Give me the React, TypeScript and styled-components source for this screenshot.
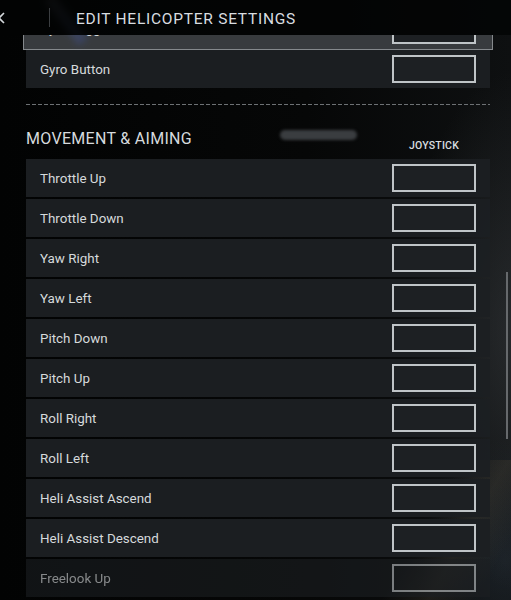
import { createGlobalStyle, styled } from 'styled-components';

const GlobalStyle = createGlobalStyle`
    html, body {
        margin: 0;
        padding: 0;
        background: #040505;
    }
`;

// Full screen backdrop with the blurred scene behind the menu
const StyledScreen = styled.div`
    position: relative;
    width: 511px;
    height: 600px;
    overflow: hidden;
    font-family: Roboto, "Liberation Sans", sans-serif;
    background:
        linear-gradient(120deg, transparent 0 78%, rgba(90, 80, 60, 0.22) 86%, transparent 94%) 0 460px / 100% 140px no-repeat,
        radial-gradient(ellipse 120px 260px at 520px 330px, rgba(70, 74, 78, 0.45), transparent),
        radial-gradient(ellipse 90px 120px at 505px 560px, rgba(40, 50, 60, 0.5), transparent),
        linear-gradient(90deg, #020303 0%, #060707 60%, #0e1011 100%);
`;

// Blue-ish light streak in the top left corner
const StyledStreak = styled.div`
    position: absolute;
    left: 60px;
    top: -8px;
    width: 12px;
    height: 56px;
    background: linear-gradient(180deg, rgba(120, 120, 130, 0.3), rgba(60, 80, 160, 0.35));
    transform: rotate(-38deg);
    filter: blur(3px);
`;

// Top bar with back arrow and title
const StyledHeader = styled.header`
    position: relative;
    z-index: 2;
    height: 35px;
    display: flex;
    align-items: center;
    background: rgba(3, 4, 4, 0.8);
`;

const StyledBack = styled.div`
    width: 30px;
    margin-left: -3px;
    display: flex;
    align-items: center;
    padding-top: 1px;
`;

const StyledDivider = styled.div`
    width: 1px;
    height: 19px;
    margin-left: 22px;
    background: #3b3e41;
`;

const StyledTitle = styled.h1`
    margin: 0 0 0 26px;
    padding-top: 2px;
    font-size: 15.5px;
    font-weight: 400;
    letter-spacing: 0.75px;
    color: #d9dde0;
    line-height: 20px;
`;

// Clipped scrolling area holding the bindings
const StyledViewport = styled.div`
    height: 565px;
    overflow: hidden;
    padding: 0 21px 0 26px;
`;

const StyledScroller = styled.div`
    margin-top: -25px;
    display: flex;
    flex-direction: column;
`;

const StyledRowList = styled.div`
    display: flex;
    flex-direction: column;
    gap: 2px;
`;

const StyledRow = styled.div<{ $selected?: boolean; $dim?: boolean }>`
    height: ${(p) => (p.$selected ? '40px' : '38px')};
    box-sizing: border-box;
    display: flex;
    align-items: center;
    justify-content: space-between;
    background: ${(p) => (p.$selected ? '#383b3e' : 'rgba(28, 31, 34, 0.97)')};
    border: ${(p) => (p.$selected ? '1px solid #85898c' : 'none')};
    margin: ${(p) => (p.$selected ? '0 -3px -2px' : '0')};
    padding: ${(p) => (p.$selected ? '0 16px 0 16px' : '0 14px')};
    opacity: ${(p) => (p.$dim ? 0.62 : 1)};
`;

const StyledLabel = styled.span<{ $raised?: boolean }>`
    font-size: 13.4px;
    letter-spacing: 0;
    color: #d6dadc;
    margin-bottom: ${(p) => (p.$raised ? '3px' : '0')};
`;

const StyledKeyBox = styled.div`
    width: 84px;
    height: 28px;
    box-sizing: border-box;
    border: 2px solid #bfc4c7;
    background: #1d2023;
`;

const StyledDashed = styled.div`
    height: 1px;
    margin-top: 16px;
    background: repeating-linear-gradient(90deg, #6d7174 0 4px, transparent 4px 6px);
`;

// Section heading with column label for the joystick bindings
const StyledSectionHead = styled.div`
    position: relative;
    height: 54px;
    display: flex;
    justify-content: space-between;
    align-items: flex-end;
`;

const StyledSectionTitle = styled.h2`
    align-self: flex-start;
    margin: 24px 0 0;
    font-size: 16px;
    font-weight: 400;
    line-height: 20px;
    letter-spacing: 0.3px;
    color: #d6dadd;
`;

const StyledColumnLabel = styled.span`
    width: 84px;
    margin: 0 14px 7px 0;
    text-align: center;
    font-size: 10.5px;
    font-weight: 500;
    line-height: 12px;
    letter-spacing: 0.2px;
    color: #d9dde0;
`;

const StyledPill = styled.div`
    position: absolute;
    left: 254px;
    top: 25px;
    width: 77px;
    height: 10px;
    border-radius: 5px;
    background: #3a3d40;
    filter: blur(1.5px);
`;

const StyledScrollbar = styled.div`
    position: absolute;
    left: 506px;
    top: 272px;
    width: 2px;
    height: 167px;
    background: #66696c;
`;

const movement = [
    'Throttle Up',
    'Throttle Down',
    'Yaw Right',
    'Yaw Left',
    'Pitch Down',
    'Pitch Up',
    'Roll Right',
    'Roll Left',
    'Heli Assist Ascend',
    'Heli Assist Descend',
    'Freelook Up',
];

export default function App() {
    return (
        <>
            <GlobalStyle />
            <StyledScreen>
                <StyledStreak />
                <StyledHeader>
                    <StyledBack>
                        <svg width="10" height="12" viewBox="0 0 10 12">
                            <path d="M7 1 L2 6 L7 11" fill="none" stroke="#d4d8db" strokeWidth="1.6" />
                        </svg>
                    </StyledBack>
                    <StyledDivider />
                    <StyledTitle>EDIT HELICOPTER SETTINGS</StyledTitle>
                </StyledHeader>

                <StyledViewport>
                    <StyledScroller>
                        {/* Previous section, scrolled mostly out of view */}
                        <StyledRowList>
                            <StyledRow $selected>
                                <StyledLabel $raised>Gyro Toggle</StyledLabel>
                                <StyledKeyBox />
                            </StyledRow>
                            <StyledRow>
                                <StyledLabel>Gyro Button</StyledLabel>
                                <StyledKeyBox />
                            </StyledRow>
                        </StyledRowList>

                        <StyledDashed />

                        <StyledSectionHead>
                            <StyledSectionTitle>MOVEMENT &amp; AIMING</StyledSectionTitle>
                            <StyledPill />
                            <StyledColumnLabel>JOYSTICK</StyledColumnLabel>
                        </StyledSectionHead>

                        <StyledRowList>
                            {movement.map((name) => (
                                <StyledRow key={name} $dim={name === 'Freelook Up'}>
                                    <StyledLabel>{name}</StyledLabel>
                                    <StyledKeyBox />
                                </StyledRow>
                            ))}
                        </StyledRowList>
                    </StyledScroller>
                </StyledViewport>

                <StyledScrollbar />
            </StyledScreen>
        </>
    );
}
